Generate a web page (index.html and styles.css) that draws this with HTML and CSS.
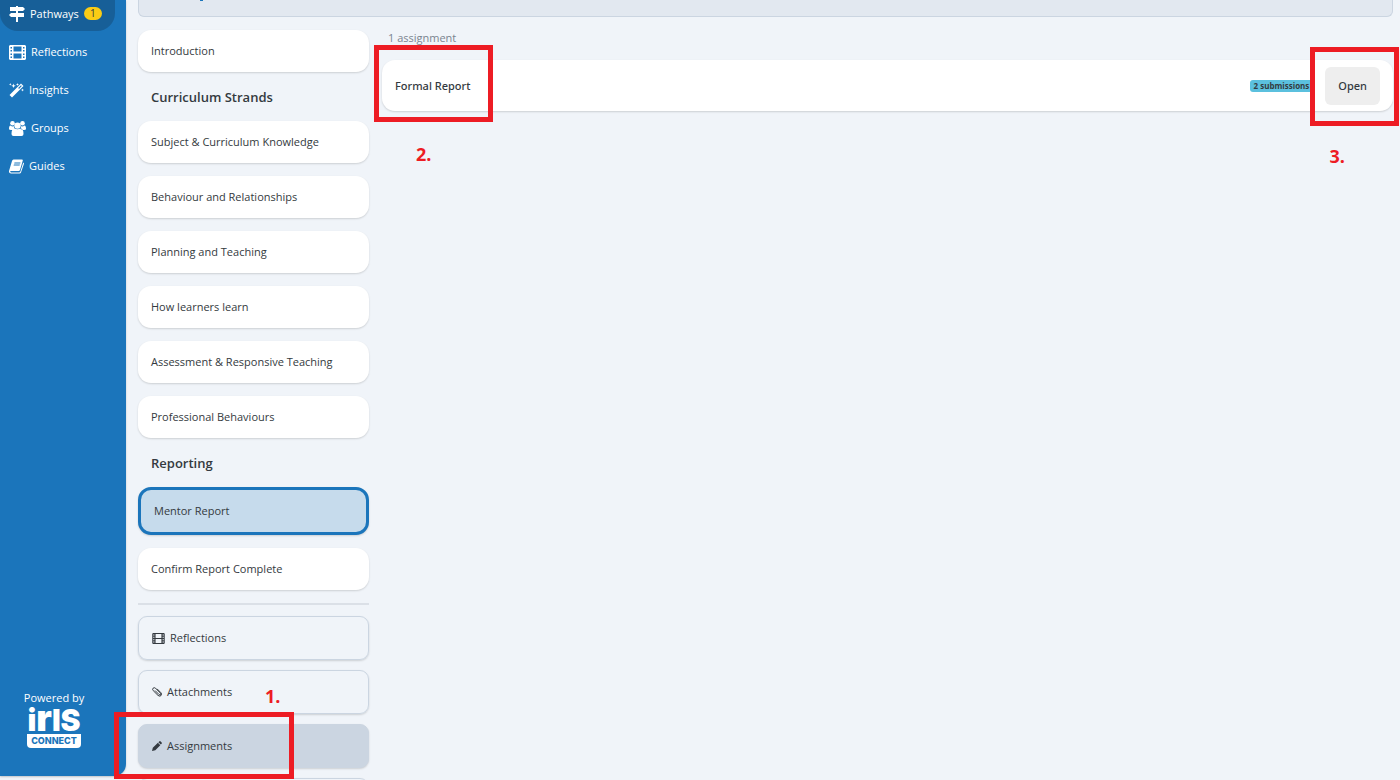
FILE: index.html
```html
<!DOCTYPE html>
<html lang="en">
<head>
    <meta charset="UTF-8">
    <meta name="viewport" content="width=device-width, initial-scale=1.0">
    <title>Assignments</title>
    <link rel="stylesheet" href="styles.css">
</head>
<body>
    <div class="layout">
        <aside class="sidebar">
            <nav class="main-nav">
                <a href="#" class="nav-link active">
                    <svg class="nav-icon" viewBox="0 0 16 16"><path d="M7 0h2v1h5l2 2-2 2H1V1h6zM2 7h13v4H2L0 9zM7 5h2v2H7zM7 11h2v5H7z"/></svg>
                    Pathways <span class="badge">1</span>
                </a>
                <a href="#" class="nav-link">
                    <svg class="nav-icon wide" viewBox="0 0 17 15"><path fill-rule="evenodd" d="M1 0h15l1 1v13l-1 1H1l-1-1V1zM1.500 2v1.500h1.500V2zM1.500 5v1.500h1.500V5zM1.500 8.500V10h1.500V8.500zM1.500 11.500V13h1.500v-1.500zM14 2v1.500h1.500V2zM14 5v1.500h1.500V5zM14 8.500V10h1.500V8.500zM14 11.500V13h1.500v-1.500zM4.500 1.500v5h8v-5zM4.500 8.500v5h8v-5z"/></svg>
                    Reflections
                </a>
                <a href="#" class="nav-link">
                    <svg class="nav-icon slim" viewBox="0 0 15 15"><path fill-rule="evenodd" d="M12 .5l2.500 2.500L3 14.500 .5 12zM12 2.300L9.200 5.100l.8.8 2.800-2.800zM4.500 .5l.6 1.700 1.700.6-1.700.6-.6 1.700-.6-1.700-1.700-.6 1.700-.6zM8.500 0l.4 1.100 1.100.4-1.100.4-.4 1.100-.4-1.100L7 1.500l1.100-.4zM1.300 0l.4.900.9.400-.9.400-.4.900-.4-.9-.9-.4.900-.4zM13.500 5.500l.4 1.100 1.100.4-1.100.4-.4 1.100-.4-1.100L12 7l1.100-.4z"/></svg>
                    Insights
                </a>
                <a href="#" class="nav-link">
                    <svg class="nav-icon wide" viewBox="0 0 17 15"><circle cx="3.500" cy="2.300" r="2.300"/><circle cx="13.500" cy="2.300" r="2.300"/><circle cx="8.500" cy="4.600" r="3.200"/><path d="M0 8q0-3.500 1.500-3.500 2 1.500 3.200.5 0 2 1.300 3-1.500 0-2.500 1H2Q0 9 0 8zM17 8q0-3.500-1.500-3.500-2 1.500-3.200.5 0 2-1.300 3 1.500 0 2.500 1H15q2 0 2-1zM2.500 13q0-5.500 3-5.500 3 1.500 6 0 3 0 3 5.500 0 2-2 2h-8q-2 0-2-2z"/></svg>
                    Groups
                </a>
                <a href="#" class="nav-link">
                    <svg class="nav-icon slim" viewBox="0 0 15 14"><path fill-rule="evenodd" d="M4.500 0H13q1 0 .8 1L11 10.500q-.4 1-1.300 1H2q-1 0-.8.8.2.6 1 .6h8.300q.6 0 .9-.8L14.200 3q1 .5.700 1.500L12 13q-.4 1-1.400 1H2Q-.3 14 0 11.500L3 1.500Q3.400 0 4.500 0zM5.500 3l-.3.900h6l.3-.9zM4.900 5l-.3.900h6l.3-.9z"/></svg>
                    Guides
                </a>
            </nav>
            <div class="powered">
                <span>Powered by</span>
                <div class="iris-logo">
                    <div class="iris-word">i<span class="tall">r</span>IS</div>
                    <div class="iris-sub">CONNECT</div>
                </div>
            </div>
        </aside>

        <main class="page">
            <div class="banner"></div>
            <div class="columns">
                <section class="steps">
                    <button class="step">Introduction</button>
                    <h2>Curriculum Strands</h2>
                    <button class="step">Subject &amp; Curriculum Knowledge</button>
                    <button class="step">Behaviour and Relationships</button>
                    <button class="step">Planning and Teaching</button>
                    <button class="step">How learners learn</button>
                    <button class="step">Assessment &amp; Responsive Teaching</button>
                    <button class="step">Professional Behaviours</button>
                    <h2>Reporting</h2>
                    <button class="step selected">Mentor Report</button>
                    <button class="step">Confirm Report Complete</button>
                    <div class="tools">
                        <button class="tool">
                            <svg class="film" viewBox="0 0 17 15"><path fill-rule="evenodd" d="M1 0h15l1 1v13l-1 1H1l-1-1V1zM1.200 2v1.500h1.800V2zM1.200 5v1.500h1.800V5zM1.200 8.500V10h1.800V8.500zM1.200 11.500V13h1.800v-1.500zM14 2v1.500h1.800V2zM14 5v1.500h1.800V5zM14 8.500V10h1.800V8.500zM14 11.500V13h1.800v-1.500zM4.500 1.500v5.200h8V1.500zM4.500 8.300v5.200h8V8.300z"/></svg>
                            Reflections
                        </button>
                        <button class="tool">
                            <svg class="clip" viewBox="0 0 10 10"><path d="M3 3.500l4 4q1 .8 1.600.1.600-.7-.2-1.500L3.600 1.300Q2.200.1 1.100 1.200 0 2.300 1.200 3.600L6 8.400q1.700 1.400 3 .2 1.200-1.400-.2-3L5 1.800"/></svg>
                            Attachments
                        </button>
                        <button class="tool current">
                            <svg class="pencil" viewBox="0 0 10 10"><path d="M7.200.5q.8-.8 1.500 0l.9.900q.7.700 0 1.400l-.8.800L6.400 1.300zM5.900 1.800l2.400 2.400L3.300 9.200 0 10l.8-3.200z"/></svg>
                            Assignments
                        </button>
                        <button class="tool" aria-label="More"></button>
                    </div>
                </section>

                <section class="assignments">
                    <p class="count">1 assignment</p>
                    <div class="card">
                        <h3>Formal Report</h3>
                        <span class="submissions">2 submissions</span>
                        <button class="open-btn">Open</button>
                    </div>
                </section>
            </div>
        </main>
    </div>

    <!-- Numbered walkthrough markers -->
    <div class="marker marker-1"></div>
    <div class="marker marker-2"></div>
    <div class="marker marker-3"></div>
    <span class="marker-label label-1">1.</span>
    <span class="marker-label label-2">2.</span>
    <span class="marker-label label-3">3.</span>
</body>
</html>
```
FILE: styles.css
```css
:root {
    --primary-color: #1b75bb;
    --primary-dark: #175f98;
    --background-color: #f0f4f9;
    --text-color: #343a40;
    --border-color: #cbd5e1;
    --marker-color: #ed1c24;
}

* {
    margin: 0;
    padding: 0;
    box-sizing: border-box;
}

body {
    position: relative;
    background: var(--background-color);
    color: var(--text-color);
    font-family: "Open Sans", sans-serif;
    font-size: 11px;
    line-height: 16px;
}

button {
    font: inherit;
    color: inherit;
    text-align: left;
    cursor: pointer;
}

.layout {
    display: flex;
    height: 100vh;
    overflow: hidden;
}

.sidebar {
    width: 126px;
    flex-shrink: 0;
    display: flex;
    flex-direction: column;
    justify-content: space-between;
    margin-bottom: 4px;
    padding-bottom: 28px;
    background: var(--primary-color);
    color: white;
    border-radius: 0 0 12px 0;
    box-shadow: 0 1px 2px rgba(0, 0, 0, 0.2);
}

.main-nav {
    display: flex;
    flex-direction: column;
    align-items: flex-start;
    gap: 4px;
}

.nav-link {
    display: flex;
    align-items: center;
    gap: 5px;
    height: 34px;
    padding: 0 13px 0 9px;
    color: white;
    text-decoration: none;
    font-weight: 500;
}

.nav-link.active {
    height: 31px;
    padding-bottom: 4px;
    background: var(--primary-dark);
    border-radius: 0 0 18px 18px;
}

.nav-icon {
    width: 16px;
    height: 16px;
    fill: white;
}

.nav-icon.wide {
    width: 17px;
    height: 15px;
}

.nav-icon.slim {
    width: 15px;
    height: 15px;
}

.badge {
    width: 18px;
    height: 13px;
    border-radius: 7px;
    background: #facc15;
    color: #343a40;
    font-size: 10px;
    line-height: 13px;
    text-align: center;
}

.powered {
    display: flex;
    flex-direction: column;
    align-items: center;
    gap: 3px;
    padding-right: 18px;
    font-weight: 500;
}

.iris-logo {
    width: 54px;
    font-family: Inter, sans-serif;
}

.iris-word {
    display: flex;
    align-items: baseline;
    justify-content: center;
    height: 25px;
    font-size: 30px;
    font-weight: 900;
    line-height: 18px;
}

.iris-word .tall {
    font-size: 36px;
}

.iris-sub {
    height: 14px;
    background: white;
    border-radius: 0 0 4px 4px;
    color: var(--primary-color);
    font-size: 9px;
    font-weight: 800;
    line-height: 13px;
    text-align: center;
}

.page {
    flex: 1;
    padding: 0 7px 0 12px;
}

.banner {
    height: 17px;
    padding-left: 61px;
    background: #e2e8f0;
    border: 1px solid var(--border-color);
    border-top: 0;
    border-radius: 0 0 6px 6px;
}

.banner::before {
    content: "";
    display: block;
    width: 3px;
    height: 1px;
    background: var(--primary-color);
}

.columns {
    display: flex;
    gap: 13px;
    padding-top: 13px;
}

.steps {
    width: 231px;
    flex-shrink: 0;
    display: flex;
    flex-direction: column;
    gap: 13px;
}

.step {
    flex-shrink: 0;
    padding: 13px;
    background: white;
    border: 0;
    border-radius: 13px;
    box-shadow: 0 1px 2px rgba(0, 0, 0, 0.15);
}

.step.selected {
    background: #c6dbec;
    border: 3px solid var(--primary-color);
}

.steps h2 {
    padding: 2px 13px 1px;
    font-size: 13px;
    font-weight: 600;
    line-height: 20px;
}

.tools {
    display: flex;
    flex-direction: column;
    gap: 10px;
    padding-top: 11px;
    border-top: 2px solid #dbe0e7;
}

.tool {
    display: flex;
    align-items: center;
    gap: 5px;
    height: 44px;
    flex-shrink: 0;
    padding: 0 13px;
    background: transparent;
    border: 1px solid var(--border-color);
    border-radius: 9px;
    box-shadow: 0 1px 2px rgba(0, 0, 0, 0.15);
}

.tool.current {
    background: var(--border-color);
}

.tool svg {
    width: 10px;
    height: 10px;
    fill: var(--text-color);
}

.tool .film {
    width: 13px;
    height: 11px;
}

.tool .clip {
    fill: none;
    stroke: var(--text-color);
}

.assignments {
    flex: 1;
}

.count {
    padding-left: 6px;
    color: #7b8490;
}

.card {
    display: flex;
    align-items: center;
    height: 51px;
    margin-top: 14px;
    padding: 0 13px;
    background: white;
    border-radius: 13px;
    box-shadow: 0 1px 2px rgba(0, 0, 0, 0.15);
}

.card h3,
.open-btn {
    font-family: "Noto Sans", sans-serif;
    font-size: 11px;
    font-weight: 500;
}

.card h3 {
    flex: 1;
}

.submissions {
    margin-right: 12px;
    padding: 0 4px;
    background: #5bc0de;
    border-radius: 3px;
    font-size: 8px;
    font-weight: 700;
    line-height: 12px;
}

.open-btn {
    padding: 11px 13px;
    background: #eee;
    border: 0;
    border-radius: 6px;
}

.marker {
    position: absolute;
    border: 5px solid var(--marker-color);
}

.marker-1 {
    left: 114px;
    top: 712px;
    width: 180px;
    height: 67px;
}

.marker-2 {
    left: 374px;
    top: 45px;
    width: 119px;
    height: 77px;
}

.marker-3 {
    right: 1px;
    top: 47px;
    width: 89px;
    height: 79px;
}

.marker-label {
    position: absolute;
    color: var(--marker-color);
    font-size: 18px;
    font-weight: 700;
    line-height: 24px;
}

.label-1 {
    left: 265px;
    top: 684px;
}

.label-2 {
    left: 416px;
    top: 142px;
}

.label-3 {
    right: 55px;
    top: 144px;
}
```
